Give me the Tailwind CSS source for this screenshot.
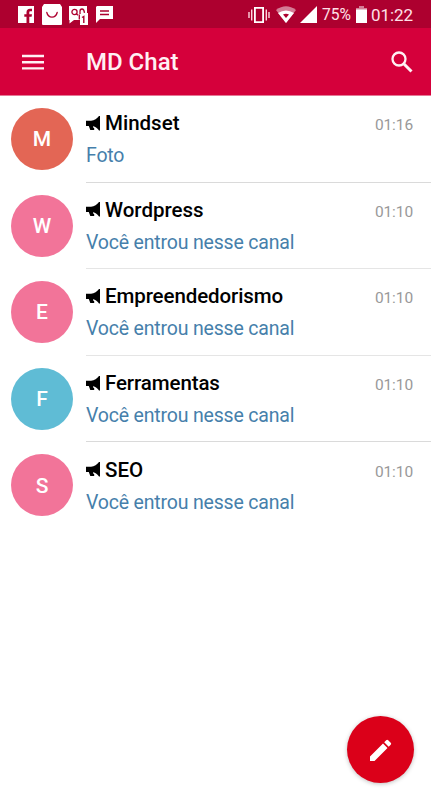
<!DOCTYPE html>
<html lang="pt-BR">
<head>
<meta charset="utf-8">
<meta name="viewport" content="width=device-width, initial-scale=1">
<title>MD Chat</title>
<script src="https://cdn.jsdelivr.net/npm/@tailwindcss/browser@4"></script>
</head>
<body class="bg-white">
<svg class="hidden">
  <symbol id="horn" viewBox="0 0 14 15"><path d="M0 4.800h5C8.500 4.500 11 2.500 13 0h1v14.500h-1c-1.500-2.200-3.500-3.800-6-4.300v1l1.200 1v1.800H4.300L2.800 10H0z"/></symbol>
</svg>
<div class="relative flex h-[800px] w-[431px] flex-col overflow-hidden bg-white font-['Roboto','Noto_Sans',sans-serif]">
  <div class="flex h-7 shrink-0 items-center bg-[#ad002f] pt-px pl-[18px] text-white">
    <svg class="h-[17px] w-4" viewBox="0 0 16 17"><path fill="#fff" d="M0 0h16v17H0z"/><path fill="#ad002f" d="M8.500 17v-6.300H6.300V8.200h2.200V6.300C8.500 4 9.800 2.800 12 2.800h2v2.500h-1.400c-1 0-1.300.5-1.300 1.300v1.600H14l-.4 2.500h-2.300V17z"/></svg>
    <svg class="ml-2 h-[21px] w-5" viewBox="0 0 20 21"><path fill="#fff" d="M2 0h16l2 3v17q0 1-1 1H1q-1 0-1-1V3z"/><path fill="none" stroke="#ad002f" stroke-width="1.300" stroke-linecap="round" d="M4.800 8.500c1.500 6.200 8.900 6.200 10.400 0"/></svg>
    <svg class="ml-[7px] h-[20px] w-[19px]" viewBox="0 0 19 20"><path fill="#fff" d="M0 1h18v7h1v12h-8v-5H5l-4.500 3.500V15H0z"/><g fill="none" stroke="#ad002f" stroke-width="1.300"><circle cx="5.500" cy="7" r="2.600"/><path d="M7 8.500l2 1.700M11 9V6.200q0-2.200 2-2.200t2.500 3.800M10.300 9.500v5"/></g><path fill="none" stroke="#ad002f" stroke-width="1.400" d="M13 12.500l1.800-1V18"/></svg>
    <svg class="ml-[8px] h-[17px] w-[17px]" viewBox="0 0 17 17"><path fill="#fff" d="M1 0h16v13H4l-4 4V1z"/><path stroke="#ad002f" stroke-width="1.300" d="M4 5h9M4 8.500h9"/></svg>
    <svg class="ml-[135px] h-[18px] w-[22px]" viewBox="0 0 22 18"><path fill="none" stroke="#fff" stroke-width="1.800" d="M6.900 1.900h8.200v14.200H6.900z"/><path stroke="#ffd5df" stroke-width="1.400" d="M3.700 3.500v11M18.300 3.500v11M1 6v6M21 6v6"/></svg>
    <svg class="ml-[6px] h-[17px] w-[20px]" viewBox="0 0 20 17"><path fill="#d47c95" d="M0 4Q10-3.500 20 4L10 17z"/><path fill="#fff" d="M2 7q8-5 16 0l-8 10z"/><path fill="#ad002f" d="M7 8.400q3-1.300 6 0L10 12z"/></svg>
    <svg class="ml-[4px] h-[17px] w-[17px]" viewBox="0 0 17 17"><path fill="#fff" d="M17 0v17H0z"/></svg>
    <span class="ml-[5px] w-[30px] text-[15.600px] leading-7 text-[#ffe0e8] whitespace-nowrap">75%</span>
    <svg class="ml-[4px] h-[17px] w-[11px]" viewBox="0 0 11 17"><path fill="#d47c95" d="M3 0h5v2h3v3H0V2h3z"/><path fill="#fff" d="M0 3.500h11V17H0z"/></svg>
    <span class="ml-[4px] text-[17px] leading-7 tracking-[-0.1px] text-[#ffe0e8] whitespace-nowrap">01:22</span>
  </div>
  <header class="flex h-[68px] shrink-0 items-center border-b border-[#e57896] bg-[#d5003b] pr-[18px] pl-[22px] text-[#fff0f4]">
    <svg class="h-4 w-[22px]" viewBox="0 0 22 16"><path stroke="currentColor" stroke-width="2.400" d="M0 2h22M0 8.200h22M0 14.400h22"/></svg>
    <h1 class="ml-[42px] text-[24px] leading-7 font-medium">MD Chat</h1>
    <svg class="ml-auto h-[22px] w-[22px]" viewBox="0 0 22 22"><g fill="none" stroke="currentColor" stroke-width="2.300"><circle cx="8" cy="8" r="6.500"/><path stroke-width="3" d="M13 13l7.500 7.500"/></g></svg>
  </header>
  <main>
    <div class="flex h-[86.600px] pl-[11px]">
      <div class="mt-3 flex h-[62px] w-[62px] items-center justify-center rounded-full bg-[#e36655] pt-[2px] text-[21px] font-medium text-white">M</div>
      <div class="ml-[13px] flex flex-1 border-b border-[#dadada] pr-[18px]">
        <div class="flex-1 pt-[13.400px]"><div class="flex items-center text-[20.500px] leading-7 font-medium text-black"><svg class="mr-[5px] h-[15px] w-[14px]"><use href="#horn"/></svg>Mindset</div><div class="mt-[4.800px] text-[19.500px] tracking-[-0.180px] leading-7 text-[#467fab]">Foto</div></div>
        <time class="mt-[17.400px] text-[15.500px] tracking-[-0.1px] leading-6 text-[#999]">01:16</time>
      </div>
    </div>
    <div class="flex h-[86.600px] pl-[11px]">
      <div class="mt-3 flex h-[62px] w-[62px] items-center justify-center rounded-full bg-[#f27499] pt-[2px] text-[21px] font-medium text-white">W</div>
      <div class="ml-[13px] flex flex-1 border-b border-[#e5e5e5] pr-[18px]">
        <div class="flex-1 pt-[13.400px]"><div class="flex items-center text-[20.500px] leading-7 font-medium text-black"><svg class="mr-[5px] h-[15px] w-[14px]"><use href="#horn"/></svg>Wordpress</div><div class="mt-[4.800px] text-[19.500px] tracking-[-0.180px] leading-7 text-[#467fab]">Você entrou nesse canal</div></div>
        <time class="mt-[17.400px] text-[15.500px] tracking-[-0.1px] leading-6 text-[#999]">01:10</time>
      </div>
    </div>
    <div class="flex h-[86.600px] pl-[11px]">
      <div class="mt-3 flex h-[62px] w-[62px] items-center justify-center rounded-full bg-[#f27499] pt-[2px] text-[21px] font-medium text-white">E</div>
      <div class="ml-[13px] flex flex-1 border-b border-[#e5e5e5] pr-[18px]">
        <div class="flex-1 pt-[13.200px]"><div class="flex items-center text-[20.500px] leading-7 font-medium tracking-[-0.1px] text-black"><svg class="mr-[5px] h-[15px] w-[14px]"><use href="#horn"/></svg>Empreendedorismo</div><div class="mt-[4.400px] text-[19.500px] tracking-[-0.180px] leading-7 text-[#467fab]">Você entrou nesse canal</div></div>
        <time class="mt-[17.200px] text-[15.500px] tracking-[-0.1px] leading-6 text-[#999]">01:10</time>
      </div>
    </div>
    <div class="flex h-[86.600px] pl-[11px]">
      <div class="mt-3 flex h-[62px] w-[62px] items-center justify-center rounded-full bg-[#5fbcd5] pt-[2px] text-[21px] font-medium text-white">F</div>
      <div class="ml-[13px] flex flex-1 border-b border-[#dadada] pr-[18px]">
        <div class="flex-1 pt-[13.400px]"><div class="flex items-center text-[20.500px] leading-7 font-medium tracking-[-0.1px] text-black"><svg class="mr-[5px] h-[15px] w-[14px]"><use href="#horn"/></svg>Ferramentas</div><div class="mt-[4.800px] text-[19.500px] tracking-[-0.180px] leading-7 text-[#467fab]">Você entrou nesse canal</div></div>
        <time class="mt-[17.400px] text-[15.500px] tracking-[-0.1px] leading-6 text-[#999]">01:10</time>
      </div>
    </div>
    <div class="flex h-[86.600px] pl-[11px]">
      <div class="mt-3 flex h-[62px] w-[62px] items-center justify-center rounded-full bg-[#f27499] pt-[2px] text-[21px] font-medium text-white">S</div>
      <div class="ml-[13px] flex flex-1 pr-[18px]">
        <div class="flex-1 pt-[13.400px]"><div class="flex items-center text-[20.500px] leading-7 font-medium text-black"><svg class="mr-[5px] h-[15px] w-[14px]"><use href="#horn"/></svg>SEO</div><div class="mt-[4.800px] text-[19.500px] tracking-[-0.180px] leading-7 text-[#467fab]">Você entrou nesse canal</div></div>
        <time class="mt-[17.400px] text-[15.500px] tracking-[-0.1px] leading-6 text-[#999]">01:10</time>
      </div>
    </div>
  </main>
  <button aria-label="Nova mensagem" class="absolute right-[17px] bottom-[17px] flex h-[67px] w-[67px] items-center justify-center rounded-full bg-[#db0019] shadow-[0_1px_4px_rgba(0,0,0,0.25)]">
    <svg class="h-[22px] w-[22px]" viewBox="0 0 22 22"><path fill="#fff" d="M0 17.500L13 4.500l4.500 4.500L4.500 22H0zM14.200 3.300l2-2q1-1 2 0l2.500 2.500q1 1 0 2l-2 2z"/></svg>
  </button>
</div>
</body>
</html>
